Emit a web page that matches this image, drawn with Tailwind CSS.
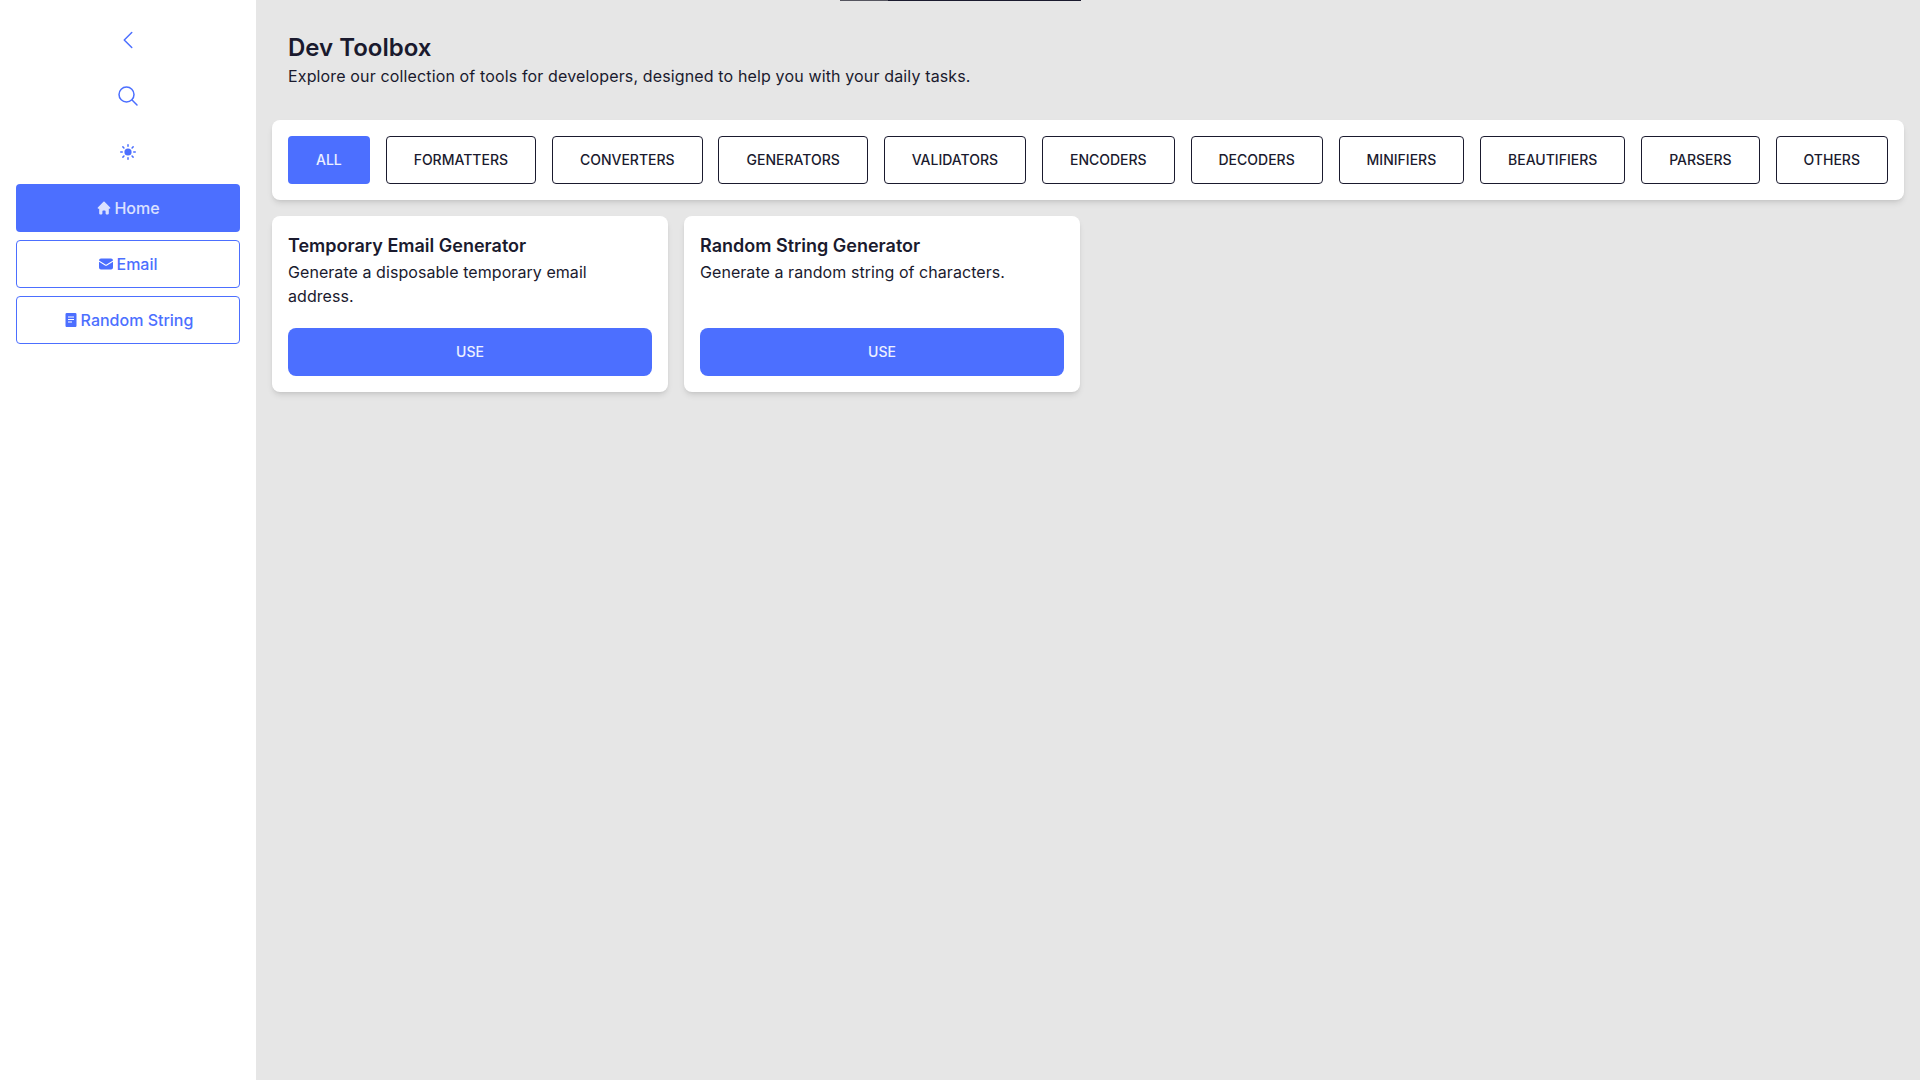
<!DOCTYPE html>
<html lang="en">
<head>
    <meta charset="UTF-8">
    <meta name="viewport" content="width=device-width, initial-scale=1.0">
    <title>Dev Toolbox</title>
    <script src="https://cdn.jsdelivr.net/npm/@tailwindcss/browser@4"></script>
</head>
<body class="h-screen overflow-hidden bg-[#e6e6e6] font-['Inter',sans-serif] text-[#1a1a2e]">
    <div class="flex h-full">
        <!-- sidebar -->
        <aside class="flex h-full w-[256px] shrink-0 flex-col gap-2 bg-white p-4 text-[#4c6fff]">
            <button class="flex h-12 items-center justify-center">
                <svg class="size-6" fill="none" viewBox="0 0 24 24" stroke="currentColor" stroke-width="1.5"><path stroke-linecap="round" stroke-linejoin="round" d="M15.75 19.5 8.25 12l7.5-7.5"/></svg>
            </button>
            <button class="flex h-12 items-center justify-center">
                <svg class="size-6" fill="none" viewBox="0 0 24 24" stroke="currentColor" stroke-width="1.5"><path stroke-linecap="round" stroke-linejoin="round" d="m21 21-5.197-5.197m0 0A7.5 7.5 0 1 0 5.196 5.196a7.5 7.5 0 0 0 10.607 10.607Z"/></svg>
            </button>
            <button class="flex h-12 items-center justify-center">
                <svg class="size-5" viewBox="0 0 20 20" fill="currentColor"><path d="M10 2a.75.75 0 0 1 .75.75v1.5a.75.75 0 0 1-1.5 0v-1.5A.75.75 0 0 1 10 2ZM10 15a.75.75 0 0 1 .75.75v1.5a.75.75 0 0 1-1.5 0v-1.5A.75.75 0 0 1 10 15ZM15.657 5.404a.75.75 0 1 0-1.06-1.06l-1.061 1.06a.75.75 0 0 0 1.06 1.06l1.06-1.06ZM6.464 14.596a.75.75 0 1 0-1.06-1.06l-1.06 1.06a.75.75 0 0 0 1.06 1.06l1.06-1.06ZM18 10a.75.75 0 0 1-.75.75h-1.5a.75.75 0 0 1 0-1.5h1.5A.75.75 0 0 1 18 10ZM5 10a.75.75 0 0 1-.75.75h-1.5a.75.75 0 0 1 0-1.5h1.5A.75.75 0 0 1 5 10ZM14.596 15.657a.75.75 0 0 0 1.06-1.06l-1.06-1.061a.75.75 0 1 0-1.06 1.06l1.06 1.06ZM5.404 6.464a.75.75 0 0 0 1.06-1.06l-1.06-1.06a.75.75 0 1 0-1.061 1.06l1.06 1.06Z"/><circle cx="10" cy="10" r="3.6"/></svg>
            </button>
            <a class="flex h-12 items-center justify-center gap-0.5 rounded bg-[#4c6fff] font-medium text-white/80">
                <svg class="size-4" viewBox="0 0 20 20" fill="currentColor"><path fill-rule="evenodd" d="M9.293 2.293a1 1 0 0 1 1.414 0l7 7A1 1 0 0 1 17 11h-1v6a1 1 0 0 1-1 1h-2a1 1 0 0 1-1-1v-3a1 1 0 0 0-1-1H9a1 1 0 0 0-1 1v3a1 1 0 0 1-1 1H5a1 1 0 0 1-1-1v-6H3a1 1 0 0 1-.707-1.707l7-7Z" clip-rule="evenodd"/></svg>
                Home
            </a>
            <a class="flex h-12 items-center justify-center gap-0.5 rounded border border-[#4c6fff] font-medium">
                <svg class="size-4" viewBox="0 0 24 24" fill="currentColor"><path d="M1.5 8.67v8.58a3 3 0 0 0 3 3h15a3 3 0 0 0 3-3V8.67l-8.928 5.493a3 3 0 0 1-3.144 0L1.5 8.67Z"/><path d="M22.5 6.908V6.75a3 3 0 0 0-3-3h-15a3 3 0 0 0-3 3v.158l9.714 5.978a1.5 1.5 0 0 0 1.572 0L22.5 6.908Z"/></svg>
                Email
            </a>
            <a class="flex h-12 items-center justify-center gap-0.5 rounded border border-[#4c6fff] font-medium">
                <svg class="size-4" viewBox="0 0 24 24" fill="currentColor"><path fill-rule="evenodd" d="M5.625 1.5A1.875 1.875 0 0 0 3.75 3.375v17.25c0 1.035.84 1.875 1.875 1.875h12.75c1.035 0 1.875-.84 1.875-1.875V3.375A1.875 1.875 0 0 0 18.375 1.5H5.625ZM7.5 6.75h9v1.5h-9v-1.5Zm0 3.75h9V12h-9v-1.5Zm0 3.75h6v1.5h-6v-1.5Z" clip-rule="evenodd"/></svg>
                Random String
            </a>
        </aside>

        <!-- main -->
        <main class="relative min-w-0 flex-1 p-4">
            <div class="absolute left-[584px] top-0 flex h-px w-[241px] bg-[#1a1a2e]">
                <div class="h-px w-12 bg-[#55555f]"></div>
            </div>
            <header class="p-4">
                <h1 class="text-2xl leading-8 font-semibold">Dev Toolbox</h1>
                <p class="leading-6 tracking-[0.14px]">Explore our collection of tools for developers, designed to help you with your daily tasks.</p>
            </header>

            <div class="mt-4 flex justify-between rounded-lg bg-white p-4 shadow-md">
                <button class="h-12 rounded bg-[#4c6fff] px-7 text-sm font-medium text-white/90">ALL</button>
                <button class="h-12 rounded border border-[#1a1a2e] px-[27px] text-sm font-medium">FORMATTERS</button>
                <button class="h-12 rounded border border-[#1a1a2e] px-[27px] text-sm font-medium">CONVERTERS</button>
                <button class="h-12 rounded border border-[#1a1a2e] px-[27px] text-sm font-medium">GENERATORS</button>
                <button class="h-12 rounded border border-[#1a1a2e] px-[27px] text-sm font-medium">VALIDATORS</button>
                <button class="h-12 rounded border border-[#1a1a2e] px-[27px] text-sm font-medium">ENCODERS</button>
                <button class="h-12 rounded border border-[#1a1a2e] px-[27px] text-sm font-medium">DECODERS</button>
                <button class="h-12 rounded border border-[#1a1a2e] px-[27px] text-sm font-medium">MINIFIERS</button>
                <button class="h-12 rounded border border-[#1a1a2e] px-[27px] text-sm font-medium">BEAUTIFIERS</button>
                <button class="h-12 rounded border border-[#1a1a2e] px-[27px] text-sm font-medium">PARSERS</button>
                <button class="h-12 rounded border border-[#1a1a2e] px-[27px] text-sm font-medium">OTHERS</button>
            </div>

            <div class="mt-4 grid grid-cols-4 gap-4">
                <div class="flex h-[176px] flex-col rounded-lg bg-white p-4 shadow-md">
                    <h2 class="text-lg leading-7 font-semibold">Temporary Email Generator</h2>
                    <p class="leading-6 tracking-[0.06px]">Generate a disposable temporary email address.</p>
                    <button class="mt-auto h-12 rounded-lg bg-[#4c6fff] text-sm font-medium text-white/90">USE</button>
                </div>
                <div class="flex h-[176px] flex-col rounded-lg bg-white p-4 shadow-md">
                    <h2 class="text-lg leading-7 font-semibold">Random String Generator</h2>
                    <p class="leading-6 tracking-[0.06px]">Generate a random string of characters.</p>
                    <button class="mt-auto h-12 rounded-lg bg-[#4c6fff] text-sm font-medium text-white/90">USE</button>
                </div>
            </div>
        </main>
    </div>
</body>
</html>
